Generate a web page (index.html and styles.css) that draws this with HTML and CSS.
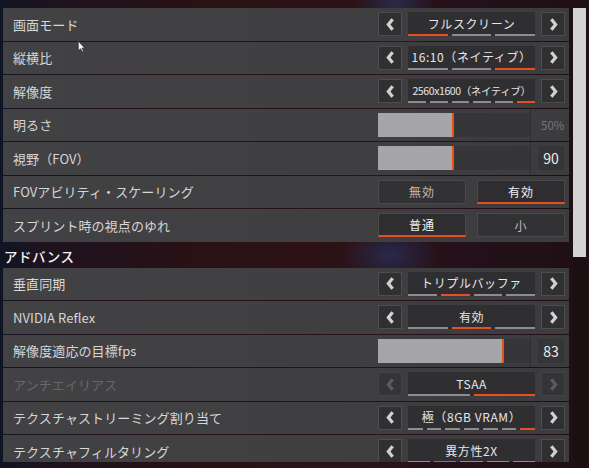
FILE: index.html
```html
<!DOCTYPE html>
<html lang="ja">
<head>
  <meta charset="UTF-8">
  <meta name="viewport" content="width=device-width, initial-scale=1.0">
  <title>ビデオ設定</title>
  <link rel="stylesheet" href="styles.css">
</head>
<body>

  <div class="screen">
    <div class="viewport">

      <!-- 基本設定 -->
      <div class="group">
        <div class="row">
          <span class="label">画面モード</span>
          <div class="carousel">
            <button class="arrow"><svg viewBox="0 0 10 14"><polyline points="7,2 3,7 7,12"/></svg></button>
            <div class="value">
              <span>フルスクリーン</span>
              <div class="segs"><i class="on"></i><i></i><i></i></div>
            </div>
            <button class="arrow"><svg viewBox="0 0 10 14"><polyline points="3,2 7,7 3,12"/></svg></button>
          </div>
        </div>

        <div class="row">
          <span class="label">縦横比</span>
          <div class="carousel">
            <button class="arrow"><svg viewBox="0 0 10 14"><polyline points="7,2 3,7 7,12"/></svg></button>
            <div class="value">
              <span>16:10（ネイティブ）</span>
              <div class="segs"><i></i><i></i><i class="on"></i></div>
            </div>
            <button class="arrow"><svg viewBox="0 0 10 14"><polyline points="3,2 7,7 3,12"/></svg></button>
          </div>
        </div>

        <div class="row">
          <span class="label">解像度</span>
          <div class="carousel">
            <button class="arrow"><svg viewBox="0 0 10 14"><polyline points="7,2 3,7 7,12"/></svg></button>
            <div class="value">
              <span class="small">2560x1600（ネイティブ）</span>
              <div class="segs"><i></i><i></i><i></i><i></i><i></i><i class="on"></i></div>
            </div>
            <button class="arrow"><svg viewBox="0 0 10 14"><polyline points="3,2 7,7 3,12"/></svg></button>
          </div>
        </div>

        <div class="row">
          <span class="label">明るさ</span>
          <div class="slider">
            <div class="track"><div class="fill" style="width: 50%"></div></div>
            <div class="num"><span class="num-plain">50%</span></div>
          </div>
        </div>

        <div class="row">
          <span class="label">視野（FOV）</span>
          <div class="slider">
            <div class="track"><div class="fill" style="width: 50%"></div></div>
            <div class="num"><span class="num-box">90</span></div>
          </div>
        </div>

        <div class="row">
          <span class="label">FOVアビリティ・スケーリング</span>
          <div class="toggle">
            <button class="opt">無効</button>
            <button class="opt selected">有効</button>
          </div>
        </div>

        <div class="row">
          <span class="label">スプリント時の視点のゆれ</span>
          <div class="toggle">
            <button class="opt selected">普通</button>
            <button class="opt">小</button>
          </div>
        </div>
      </div>

      <h2 class="section">アドバンス</h2>

      <!-- アドバンス設定 -->
      <div class="group">
        <div class="row">
          <span class="label">垂直同期</span>
          <div class="carousel">
            <button class="arrow"><svg viewBox="0 0 10 14"><polyline points="7,2 3,7 7,12"/></svg></button>
            <div class="value">
              <span>トリプルバッファ</span>
              <div class="segs"><i></i><i class="on"></i><i></i><i></i></div>
            </div>
            <button class="arrow"><svg viewBox="0 0 10 14"><polyline points="3,2 7,7 3,12"/></svg></button>
          </div>
        </div>

        <div class="row">
          <span class="label">NVIDIA Reflex</span>
          <div class="carousel">
            <button class="arrow"><svg viewBox="0 0 10 14"><polyline points="7,2 3,7 7,12"/></svg></button>
            <div class="value">
              <span>有効</span>
              <div class="segs"><i></i><i class="on"></i><i></i></div>
            </div>
            <button class="arrow"><svg viewBox="0 0 10 14"><polyline points="3,2 7,7 3,12"/></svg></button>
          </div>
        </div>

        <div class="row">
          <span class="label">解像度適応の目標fps</span>
          <div class="slider">
            <div class="track"><div class="fill" style="width: 83%"></div></div>
            <div class="num"><span class="num-box">83</span></div>
          </div>
        </div>

        <div class="row disabled">
          <span class="label">アンチエイリアス</span>
          <div class="carousel">
            <button class="arrow"><svg viewBox="0 0 10 14"><polyline points="7,2 3,7 7,12"/></svg></button>
            <div class="value">
              <span>TSAA</span>
              <div class="segs"><i></i><i class="on"></i></div>
            </div>
            <button class="arrow"><svg viewBox="0 0 10 14"><polyline points="3,2 7,7 3,12"/></svg></button>
          </div>
        </div>

        <div class="row">
          <span class="label">テクスチャストリーミング割り当て</span>
          <div class="carousel">
            <button class="arrow"><svg viewBox="0 0 10 14"><polyline points="7,2 3,7 7,12"/></svg></button>
            <div class="value">
              <span>極（8GB VRAM）</span>
              <div class="segs"><i></i><i></i><i></i><i></i><i></i><i></i><i class="on"></i></div>
            </div>
            <button class="arrow"><svg viewBox="0 0 10 14"><polyline points="3,2 7,7 3,12"/></svg></button>
          </div>
        </div>

        <div class="row">
          <span class="label">テクスチャフィルタリング</span>
          <div class="carousel">
            <button class="arrow"><svg viewBox="0 0 10 14"><polyline points="7,2 3,7 7,12"/></svg></button>
            <div class="value">
              <span>異方性2X</span>
              <div class="segs"><i></i><i class="on"></i><i></i><i></i><i></i></div>
            </div>
            <button class="arrow"><svg viewBox="0 0 10 14"><polyline points="3,2 7,7 3,12"/></svg></button>
          </div>
        </div>
      </div>

    </div>

    <div class="scrollbar"><div class="thumb"></div></div>
  </div>

  <!-- curseur de la souris -->
  <svg class="cursor" viewBox="0 0 8 12"><path d="M1 1 L1 10 L3 8 L5 11 L6 10.5 L4.5 7.5 L7 7.5 Z"/></svg>

</body>
</html>
```

FILE: styles.css
```css
/* Page */
body {
  margin: 0;
  width: 589px;
  height: 468px;
  overflow: hidden;
  position: relative;
  font-family: "Noto Sans CJK JP", "Noto Sans", sans-serif;
  color: #d6d6d6;
  background:
    radial-gradient(ellipse 40px 60px at 395px 0px, rgba(40, 60, 110, 0.6), transparent),
    radial-gradient(ellipse 50px 30px at 390px 255px, rgba(40, 60, 120, 0.55), transparent),
    linear-gradient(90deg, #101525 0%, #1c1320 6%, #2a1114 35%, #2c1216 60%, #24111a 80%, #1f1013 100%);
}

.screen {
  display: flex;
  gap: 4px;
  padding: 8px 0 0 3px;
  height: 460px;
}

/* Zone défilante */
.viewport {
  width: 566px;
  height: 454px;
  overflow: hidden;
}

.group {
  display: flex;
  flex-direction: column;
  gap: 1px;
}

/* Ligne de réglage */
.row {
  height: 32.5px;
  display: flex;
  align-items: center;
  justify-content: space-between;
  padding: 0 4px 0 10px;
  background: linear-gradient(90deg, #424245 0%, #3f3f42 60%, #3c3c3f 100%);
}

.label {
  font-size: 13px;
  letter-spacing: 0.1px;
}

.disabled .label {
  color: #676769;
}

/* Titre de section */
.section {
  margin: 0;
  height: 26px;
  line-height: 28px;
  padding-left: 1px;
  font-size: 13.5px;
  font-weight: 500;
  color: #f2f2f2;
  letter-spacing: 0.5px;
}

/* Sélecteur à flèches */
.carousel {
  display: flex;
  gap: 6px;
}

.arrow {
  width: 24px;
  height: 24px;
  padding: 0;
  border: 1px solid #4d4d50;
  background: #303033;
  display: flex;
  align-items: center;
  justify-content: center;
}

.arrow svg {
  width: 11px;
  height: 15px;
  fill: none;
  stroke: #d2d2d2;
  stroke-width: 3;
}

.disabled .arrow {
  border-color: #434346;
  background: #343437;
}

.disabled .arrow svg {
  stroke: #5b5b5e;
}

.value {
  width: 127px;
  height: 24px;
  background: #2f2f32;
  position: relative;
  display: flex;
  align-items: center;
  justify-content: center;
  font-size: 12px;
  color: #e6e6e6;
  letter-spacing: 0.6px;
}

.value span {
  margin-top: -2px;
}

.value .small {
  font-size: 10.5px;
  letter-spacing: -0.4px;
}

/* Segments sous la valeur */
.segs {
  position: absolute;
  left: 0;
  right: 0;
  bottom: 0;
  display: flex;
  gap: 4px;
}

.segs i {
  flex: 1;
  height: 2px;
  background: #8c8c8e;
}

.segs i.on {
  background: #e4501f;
}

/* Curseur de valeur */
.slider {
  display: flex;
  align-self: stretch;
}

.track {
  width: 152px;
  height: 24px;
  align-self: center;
  background: #363639;
}

.fill {
  height: 100%;
  background: #a6a6a8;
  border-right: 2px solid #e8501f;
  box-sizing: border-box;
}

.num {
  width: 27px;
  padding-left: 7px;
  border-left: 1px solid #303033;
  display: flex;
  align-items: center;
}

.num-plain {
  font-size: 11.5px;
  color: #76767a;
  padding-left: 3px;
}

.num-box {
  width: 26px;
  height: 24px;
  background: #353538;
  color: #ececec;
  font-size: 14px;
  display: flex;
  align-items: center;
  justify-content: center;
}

/* Boutons à deux choix */
.toggle {
  display: flex;
  gap: 11px;
}

.opt {
  width: 88px;
  height: 24px;
  border: 1px solid #4a4a4d;
  background: #323235;
  color: #bcbcbc;
  font-family: inherit;
  font-size: 12px;
  letter-spacing: 1px;
  padding: 0;
}

.opt.selected {
  color: #f0f0f0;
  background: #2e2e31;
  border-bottom: 2px solid #e4501f;
}

/* Barre de défilement */
.scrollbar {
  width: 13px;
  height: 460px;
  background: #1c0f12;
}

.thumb {
  height: 249px;
  background: #d3d3d3;
}

/* Pointeur */
.cursor {
  position: absolute;
  left: 77px;
  top: 40px;
  width: 9px;
  height: 13px;
  fill: #f4f4f4;
  stroke: #222;
  stroke-width: 0.6;
}
```
